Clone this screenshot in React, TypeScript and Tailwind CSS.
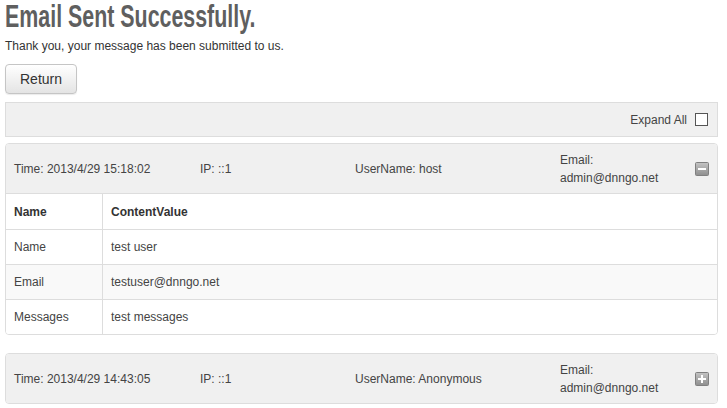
import React from "react";

interface Entry {
  time: string;
  ip: string;
  user: string;
  email: string;
  open: boolean;
  rows?: { name: string; value: string }[];
}

const entries: Entry[] = [
  {
    time: "2013/4/29 15:18:02",
    ip: "::1",
    user: "host",
    email: "admin@dnngo.net",
    open: true,
    rows: [
      { name: "Name", value: "test user" },
      { name: "Email", value: "testuser@dnngo.net" },
      { name: "Messages", value: "test messages" },
    ],
  },
  {
    time: "2013/4/29 14:43:05",
    ip: "::1",
    user: "Anonymous",
    email: "admin@dnngo.net",
    open: false,
  },
];

function ToggleIcon({ open }: { open: boolean }) {
  const id = open ? "g-open" : "g-closed";
  return (
    <svg width="14" height="14" viewBox="0 0 14 14">
      <defs>
        <linearGradient id={id} x1="0" y1="0" x2="0" y2="1">
          <stop offset="0" stopColor="#c4c4c4" />
          <stop offset="1" stopColor="#8e8e8e" />
        </linearGradient>
      </defs>
      <rect x="0.5" y="0.5" width="13" height="13" rx="1" fill={`url(#${id})`} stroke="#808080" />
      <rect x="3" y="6" width="8" height="2" fill="#fff" />
      {!open && <rect x="6" y="3" width="2" height="8" fill="#fff" />}
    </svg>
  );
}

function EntryPanel({ entry }: { entry: Entry }) {
  return (
    <div className="border border-[#dddddd] rounded-[4px] overflow-hidden">
      {/* header */}
      <div className="flex items-center h-[49px] bg-[#f0f0f0] pl-[8px] pr-[8px] text-[#444]">
        <span className="w-[186px]">Time: {entry.time}</span>
        <span className="w-[155px]">IP: {entry.ip}</span>
        <span className="w-[205px]">UserName: {entry.user}</span>
        <span className="flex-1 leading-[18px]">
          Email:
          <br />
          {entry.email}
        </span>
        <ToggleIcon open={entry.open} />
      </div>

      {/* content */}
      {entry.open && entry.rows && (
        <div className="border-t border-[#dddddd]">
          <div className="flex h-[35px] items-center font-bold text-[#333] bg-white">
            <div className="w-[97px] h-full flex items-center pl-[8px] border-r border-[#dddddd]">Name</div>
            <div className="pl-[8px]">ContentValue</div>
          </div>
          {entry.rows.map((r, i) => (
            <div
              key={r.name}
              className={`flex h-[35px] items-center border-t border-[#dddddd] text-[#444] ${
                i % 2 === 1 ? "bg-[#f9f9f9]" : "bg-white"
              }`}
            >
              <div className="w-[97px] h-full flex items-center pl-[8px] border-r border-[#dddddd]">{r.name}</div>
              <div className="pl-[8px]">{r.value}</div>
            </div>
          ))}
        </div>
      )}
    </div>
  );
}

export default function App() {
  return (
    <div className="w-[727px] h-[408px] bg-white overflow-hidden font-['Liberation_Sans',Arial,sans-serif] text-[12px] text-[#333] pl-[5px] pr-[9px]">
      {/* no condensed font installed: squeeze the heading horizontally */}
      <h1 className="h-[38px]">
        <span className="inline-block origin-left scale-x-[0.69] font-['Liberation_Sans',sans-serif] font-bold text-[31px] leading-[34px] text-[#5f5f5f] whitespace-nowrap">
          Email Sent Successfully.
        </span>
      </h1>
      <p className="leading-[16px]">Thank you, your message has been submitted to us.</p>
      <button className="mt-[10px] w-[72px] h-[30px] rounded-[4px] border border-[#c5c5c5] bg-gradient-to-b from-white to-[#e4e4e4] text-[14px] text-[#333] shadow-[0_1px_1px_rgba(0,0,0,0.08)]">
        Return
      </button>

      {/* expand all bar */}
      <div className="mt-[8px] h-[35px] flex items-center justify-end gap-[8px] bg-[#f0f0f0] border border-[#dddddd] pr-[9px] text-[#444]">
        <span>Expand All</span>
        <span className="w-[13px] h-[13px] border border-[#555] bg-white" />
      </div>

      <div className="mt-[6px] flex flex-col gap-[18px]">
        {entries.map((e) => (
          <EntryPanel key={e.time} entry={e} />
        ))}
      </div>
    </div>
  );
}
